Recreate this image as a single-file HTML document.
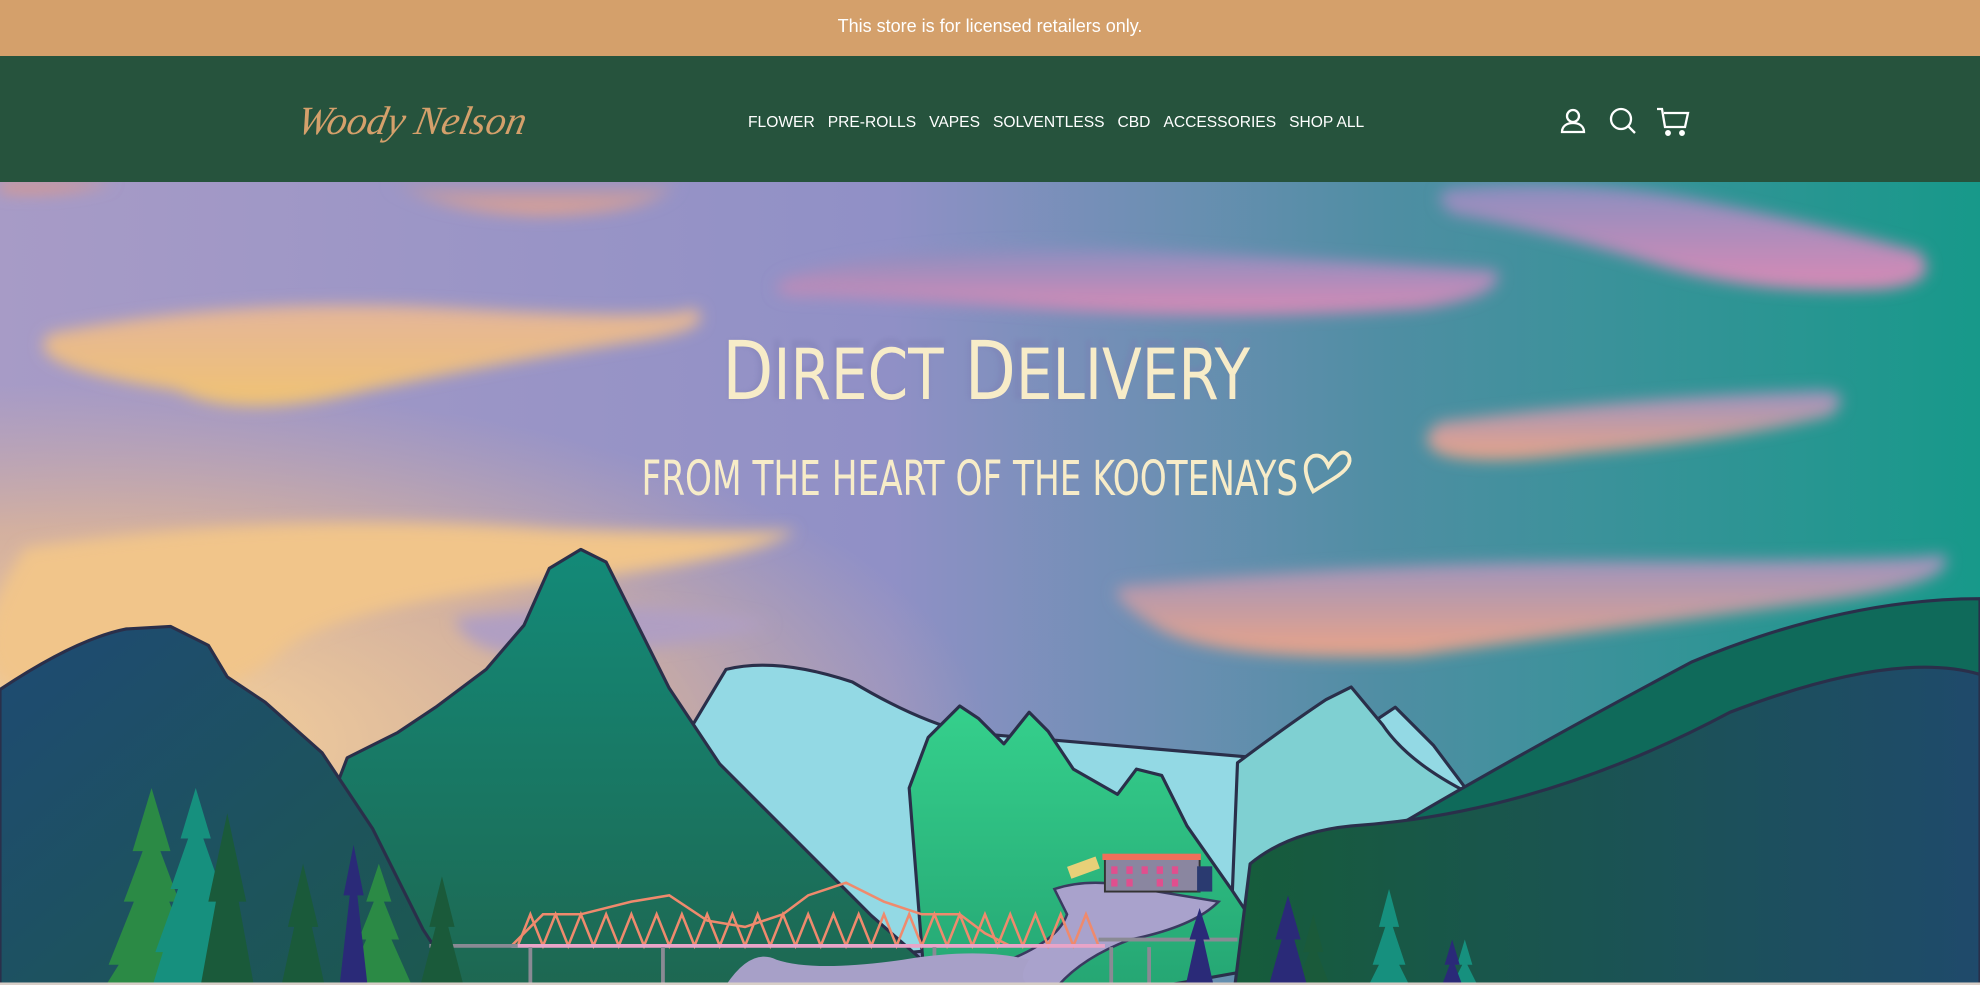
<!DOCTYPE html>
<html><head><meta charset="utf-8"><style>
html,body{margin:0;padding:0;width:1980px;height:985px;overflow:hidden;font-family:"Liberation Sans",sans-serif}
.ann{height:56px;background:#d4a06b;color:#fff;text-align:center;line-height:53px;font-size:18px}
.nav{height:126px;background:#26533d;position:relative;overflow:hidden}
.logo{position:absolute;left:298px;top:45px;color:#d4a06b;font-family:"Liberation Serif",serif;font-style:italic;font-size:40px;line-height:40px;transform:skewX(-12deg)}
.menu{position:absolute;left:748px;top:58px;color:#fff;font-size:15.6px;white-space:nowrap}
.menu span{margin-right:13px}
.ic{position:absolute;top:50px}
svg.hero{display:block;position:absolute;left:0;top:182px}
</style></head><body>
<div class="ann">This store is for licensed retailers only.</div>
<div class="nav">
<div class="logo">Woody Nelson</div>
<div class="menu"><span>FLOWER</span><span>PRE-ROLLS</span><span>VAPES</span><span>SOLVENTLESS</span><span>CBD</span><span>ACCESSORIES</span><span>SHOP ALL</span></div>
<svg class="ic" style="left:1558px" width="30" height="30" viewBox="0 0 30 30" fill="none" stroke="#fff" stroke-width="2.3"><circle cx="15" cy="10" r="6"/><path d="M4 26h22c0-6-5-9-11-9S4 20 4 26z"/></svg>
<svg class="ic" style="left:1608px" width="30" height="30" viewBox="0 0 30 30" fill="none" stroke="#fff" stroke-width="2.3"><circle cx="13" cy="13" r="10"/><path d="M20 20l7 7"/></svg>
<svg class="ic" style="left:1656px" width="34" height="30" viewBox="0 0 34 30" fill="none" stroke="#fff" stroke-width="2.3"><path d="M1 3h5l3 18h20l3-14H8"/><circle cx="12" cy="27" r="1.8" fill="#fff"/><circle cx="26" cy="27" r="1.8" fill="#fff"/></svg>
</div>
<svg class="hero" width="1980" height="803" viewBox="0 0 1568 636" preserveAspectRatio="none">
<defs>
<linearGradient id="sky" x1="0" y1="0" x2="1" y2="0"><stop offset="0" stop-color="#a79bc6"/><stop offset="0.45" stop-color="#9090c6"/><stop offset="0.7" stop-color="#4f8ea3"/><stop offset="1" stop-color="#17998a"/></linearGradient>
<radialGradient id="warm" cx="0.05" cy="0.7" r="0.45"><stop offset="0" stop-color="#fdd89a"/><stop offset="0.6" stop-color="#e6b98f" stop-opacity="0.7"/><stop offset="1" stop-color="#d8b0a0" stop-opacity="0"/></radialGradient>
<filter id="b"><feGaussianBlur stdDeviation="6"/></filter>
<filter id="b2"><feGaussianBlur stdDeviation="2"/></filter>
<linearGradient id="cp" x1="0" y1="0" x2="0" y2="1"><stop offset="0" stop-color="#8a8fc0"/><stop offset="1" stop-color="#d98ab5"/></linearGradient>
<linearGradient id="co" x1="0" y1="0" x2="0" y2="1"><stop offset="0" stop-color="#9a93c0"/><stop offset="1" stop-color="#eaa488"/></linearGradient>
<linearGradient id="cy" x1="0" y1="0" x2="0" y2="1"><stop offset="0" stop-color="#e4b59a"/><stop offset="1" stop-color="#f0c373"/></linearGradient>
<linearGradient id="lm" x1="0" y1="0" x2="1" y2="1"><stop offset="0" stop-color="#1e4a73"/><stop offset="1" stop-color="#1c5b4a"/></linearGradient>
<linearGradient id="cm" x1="0" y1="0" x2="0" y2="1"><stop offset="0" stop-color="#138a78"/><stop offset="1" stop-color="#1e6650"/></linearGradient>
<linearGradient id="gm" x1="0" y1="0" x2="0" y2="1"><stop offset="0" stop-color="#35d08c"/><stop offset="1" stop-color="#23a070"/></linearGradient>
<linearGradient id="rm" x1="0" y1="0" x2="1" y2="0"><stop offset="0" stop-color="#165c3b"/><stop offset="1" stop-color="#1f4a6b"/></linearGradient>
</defs>
<rect width="1568" height="636" fill="url(#sky)"/>
<rect width="1568" height="636" fill="url(#warm)"/>
<g filter="url(#b)">
<path d="M0 0h90q-40 12-90 8z" fill="#d8988f"/>
<path d="M310 0h225q-10 25-110 26q-80-2-115-26z" fill="url(#co)"/>
<path d="M1150 5q100-10 200 10t170 40q20 25-30 30q-100 5-180-20t-160-40q-20-15 0-20z" fill="url(#cp)"/>
<path d="M625 75q100-30 300-20t260 15q10 20-60 30q-150 10-300 0t-200-10q-20-5 0-15z" fill="url(#cp)"/>
<path d="M40 120q150-30 320-20t190 0q20 15-40 25q-100 15-220 40q-100 25-150 0q-130 -20-100-45z" fill="url(#cy)"/>
<path d="M1140 190q150-20 300-25q30 0 10 20q-80 20-200 30q-80 10-110 0q-20-10 0-25z" fill="url(#co)"/>
<path d="M20 290q200-30 420-15q180 5 190 0q-20 20-170 40q-200 20-240 60q-60 50-200 30q-60-20 0-115z" fill="#f1c58a"/>
<path d="M890 320q200-20 400-20t250-5q15 25-120 40q-150 20-300 40q-150 5-200-20q-50-30-30-35z" fill="url(#co)"/>
<path d="M360 345q150-20 250 5q-40 15-160 25q-80 5-90-30z" fill="#b09fc2"/>
</g>
<g stroke="#2a2f4a" stroke-width="2.5" stroke-linejoin="round">
<path d="M575 386q40-10 100 10q50 30 90 40l230 20l40 60l40-80l30-20l30 30l30 40l60 80l-800 70z" fill="#93d9e4"/>
<path d="M980 460q40-30 70-50l20-10l25 30q20 30 70 55l0 100h-190z" fill="#7fd0d2"/>
<path d="M720 480l15-40l25-25l15 10l20 20l20-25l15 15l20 30l35 20l15-20l20 5l20 40l35 50l40 60l-280 50z" fill="url(#gm)"/>
<path d="M1090 520q100-60 250-140q120-50 228-50v306h-480z" fill="#0f6a5a"/>
<path d="M275 456l40-20l30-20l40-30l30-35l20-45l25-15l20 10l25 50l25 50l40 60l60 60l60 60l80 70h-570z" fill="url(#cm)"/>
<path d="M0 402q60-40 100-48l35-2l30 15l15 25l30 20l45 40l40 60l40 80l60 92h-395z" fill="url(#lm)"/>
<path d="M990 540q30-25 80-30q150-10 300-90q130-50 198-30v246h-590z" fill="url(#rm)"/>
</g>
<path d="M835 560q30-10 70 0l60 10q-20 20-70 30q-40 15-60 40q-30 30 0 60h-200l10-40q50-20 110-30q80-20 90-50z" fill="#a9a2cc" stroke="#3a3a60" stroke-width="2"/>
<rect x="875" y="535" width="75" height="27" fill="#8a86a0" stroke="#333" stroke-width="1.5"/>
<rect x="873" y="532" width="78" height="5" fill="#f06f5a"/>
<rect x="948" y="542" width="12" height="20" fill="#2a3a70"/>
<g fill="#e04f8e"><rect x="880" y="542" width="5" height="6"/><rect x="892" y="542" width="5" height="6"/><rect x="904" y="542" width="5" height="6"/><rect x="916" y="542" width="5" height="6"/><rect x="928" y="542" width="5" height="6"/><rect x="880" y="552" width="5" height="6"/><rect x="892" y="552" width="5" height="6"/><rect x="916" y="552" width="5" height="6"/><rect x="928" y="552" width="5" height="6"/></g>
<rect x="846" y="538" width="24" height="10" fill="#e8d078" transform="rotate(-20 858 543)"/>
<g stroke="#ef8a6d" stroke-width="2" fill="none">
<path d="M405 605l25-25l30 0l40-10l30-5l30 20l30 5l30-10l20-15l30-10l30 15l30 10l30 0l20 15l20 10"/>
<path d="M410 605l10-25 10 25 10-25 10 25 10-25 10 25 10-25 10 25 10-25 10 25 10-25 10 25 10-25 10 25 10-25 10 25 10-25 10 25 10-25 10 25 10-25 10 25 10-25 10 25 10-25 10 25 10-25 10 25 10-25 10 25 10-25 10 25 10-25 10 25 10-25 10 25 10-25 10 25 10-25 10 25 10-25 10 25 10-25 10 25 10-25 10 25"/>
</g>
<path d="M405 605h470" stroke="#e9a4c8" stroke-width="3"/>
<g stroke="#8a8a94" stroke-width="3"><path d="M420 606v30M525 606v30M740 606v30M880 606v30M910 606v30"/><path d="M340 605h70M870 600h110"/></g>
<path d="M575 636q20-30 40-20q30 10 100 0q60-10 100 0q-10 15 0 20z" fill="#a7a0c8"/>
<g fill="#2b8a45">
<path d="M120 480l-15 50h8l-15 40h8l-20 50h8l-10 16h72l-10-16h8l-20-50h8l-15-40h8z"/>
<path d="M300 540l-10 30h6l-12 30h6l-16 36h52l-16-36h6l-12-30h6z"/>
</g>
<g fill="#16907e">
<path d="M155 480l-12 40h6l-14 40h6l-18 50h6l-8 26h68l-8-26h6l-18-50h6l-14-40h6z"/>
<path d="M1100 560l-8 30h5l-10 30h5l-8 16h32l-8-16h5l-10-30h5z"/>
<path d="M1160 600l-6 20h4l-8 16h20l-8-16h4z"/>
</g>
<g fill="#1a5a3a">
<path d="M180 500l-15 70h6l-12 66h42l-12-66h6z"/>
<path d="M240 540l-12 50h5l-10 46h34l-10-46h5z"/>
<path d="M350 550l-10 40h5l-12 46h34l-12-46h5z"/>
<path d="M1040 580l-8 30h5l-10 26h26l-10-26h5z"/>
</g>
<g fill="#2a2a78"><path d="M280 525l-8 40h5l-8 71h22l-8-71h5z"/><path d="M1020 565l-10 35h5l-10 36h30l-10-36h5z"/><path d="M950 575l-8 25h5l-8 36h22l-8-36h5z"/><path d="M1150 600l-6 20h4l-6 16h16l-6-16h4z"/></g>
<rect y="634" width="1568" height="2" fill="#d8cfc8"/>
<g fill="#f7ecc8" font-family="'DejaVu Sans Condensed','Liberation Sans Narrow','Liberation Sans',sans-serif" filter="url(#b2)" opacity="0.35"><text x="572" y="172" font-size="64" textLength="418" lengthAdjust="spacingAndGlyphs" fill="#7a7ab0">DIRECT DELIVERY</text></g>
<g fill="#f7ecc8" font-family="'DejaVu Sans Condensed','Liberation Sans Narrow','Liberation Sans',sans-serif">
<text x="572" y="172" font-size="64" textLength="418" lengthAdjust="spacingAndGlyphs">D<tspan font-size="56">IRECT</tspan> D<tspan font-size="56">ELIVERY</tspan></text>
<text x="508" y="248" font-size="38" textLength="520" lengthAdjust="spacingAndGlyphs">FROM THE HEART OF THE KOOTENAYS</text>
</g>
<path d="M1040 245q-12-22 0-28q8-2 12 8q10-16 16-8q4 8-12 18z" fill="none" stroke="#f7ecc8" stroke-width="3"/>
</svg>
</body></html>
